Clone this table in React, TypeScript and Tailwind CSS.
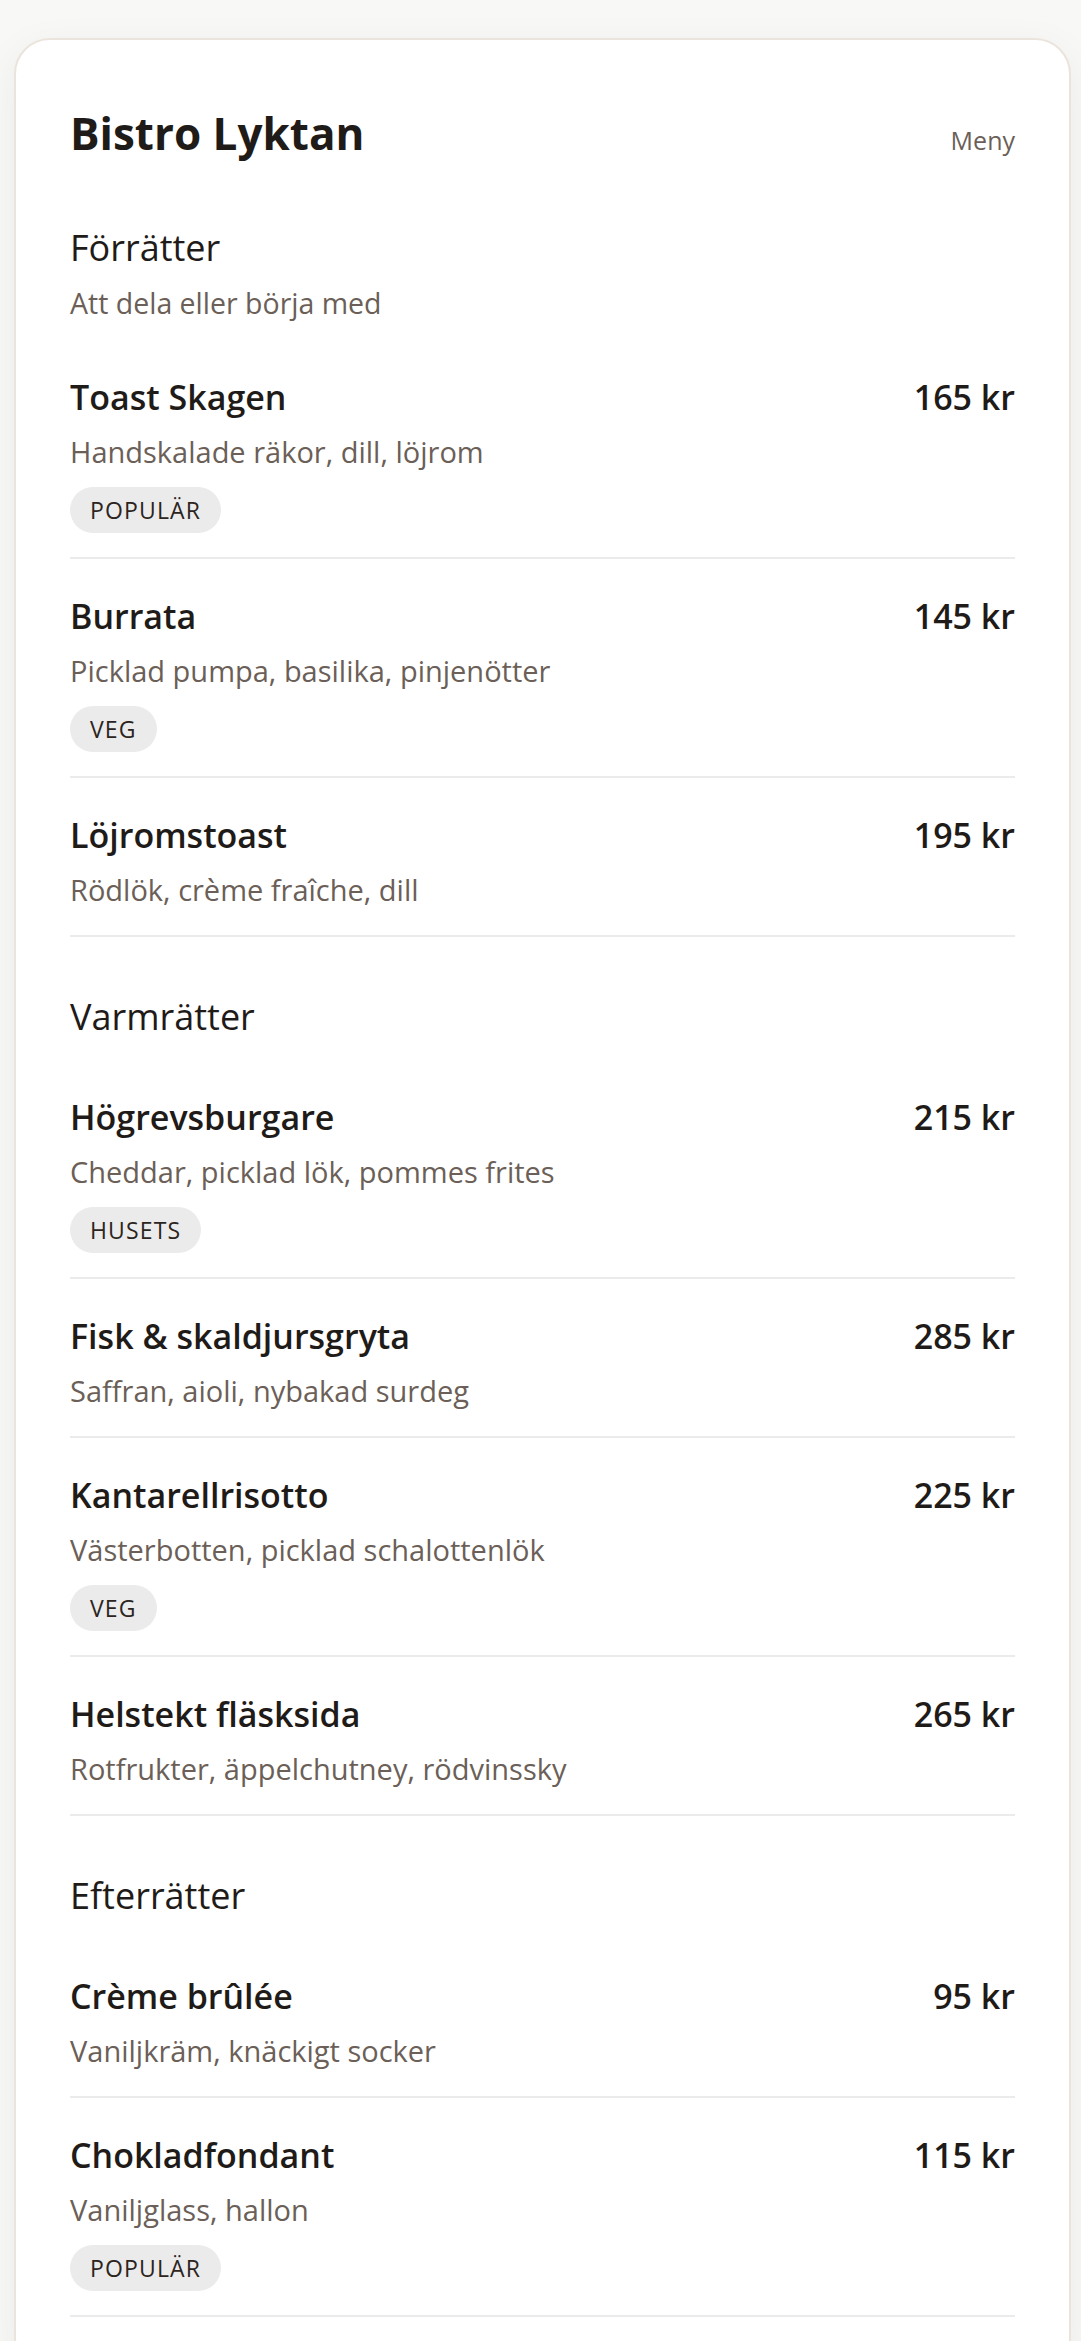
import React from 'react';

type MenuItem = {
  name: string;
  desc: string;
  price: number;
  tag?: string;
};

type Section = {
  title: string;
  subtitle?: string;
  items: MenuItem[];
};

const SECTIONS: Section[] = [
  {
    title: 'Förrätter',
    subtitle: 'Att dela eller börja med',
    items: [
      { name: 'Toast Skagen', desc: 'Handskalade räkor, dill, löjrom', price: 165, tag: 'Populär' },
      { name: 'Burrata', desc: 'Picklad pumpa, basilika, pinjenötter', price: 145, tag: 'Veg' },
      { name: 'Löjromstoast', desc: 'Rödlök, crème fraîche, dill', price: 195 },
    ],
  },
  {
    title: 'Varmrätter',
    items: [
      { name: 'Högrevsburgare', desc: 'Cheddar, picklad lök, pommes frites', price: 215, tag: 'Husets' },
      { name: 'Fisk & skaldjursgryta', desc: 'Saffran, aioli, nybakad surdeg', price: 285 },
      { name: 'Kantarellrisotto', desc: 'Västerbotten, picklad schalottenlök', price: 225, tag: 'Veg' },
      { name: 'Helstekt fläsksida', desc: 'Rotfrukter, äppelchutney, rödvinssky', price: 265 },
    ],
  },
  {
    title: 'Efterrätter',
    items: [
      { name: 'Crème brûlée', desc: 'Vaniljkräm, knäckigt socker', price: 95 },
      { name: 'Chokladfondant', desc: 'Vaniljglass, hallon', price: 115, tag: 'Populär' },
    ],
  },
];

const MenuRow: React.FC<{ item: MenuItem }> = ({ item }) => (
  <li className="border-b-2 border-[#ebebeb] pt-[33px] pb-6">
    <div className="flex items-baseline justify-between gap-6">
      <h3 className="text-[34px] leading-[48px] font-semibold text-[#1f1b18]">{item.name}</h3>
      <span className="text-[34px] leading-[48px] font-semibold text-[#1f1b18] whitespace-nowrap">{item.price} kr</span>
    </div>
    <p className="mt-[10px] text-[29px] leading-[42px] text-[#6b5f58]">{item.desc}</p>
    {item.tag && (
      <span className="mt-[14px] inline-flex h-[46px] items-center rounded-full bg-[#ebebeb] px-5 text-[23px] uppercase tracking-wider text-[#2b2420]">
        {item.tag}
      </span>
    )}
  </li>
);

export default function App() {
  return (
    <div className="min-h-screen bg-[#f8f8f7] pl-[14px] pr-[10px] pt-[38px] font-['Open_Sans',sans-serif]">
      <div className="rounded-[36px] border-2 border-[#ebe4dc] bg-white px-[54px] pt-[65px] pb-14 shadow-[0_10px_40px_rgba(0,0,0,0.06)]">
        <header className="mb-[61px] flex items-baseline justify-between">
          <h1 className="text-[44px] leading-[56px] font-bold text-[#1f1b18]">Bistro Lyktan</h1>
          <span className="text-[25px] text-[#6b5f58]">Meny</span>
        </header>

        <div className="flex flex-col gap-[54px]">
          {SECTIONS.map(section => (
            <section key={section.title}>
              <div className="mb-[17px]">
                <h2 className="text-[36px] leading-[52px] font-normal text-[#1f1b18]">{section.title}</h2>
                {section.subtitle && (
                  <p className="mt-[9px] text-[28.5px] leading-[40px] text-[#6b5f58]">{section.subtitle}</p>
                )}
              </div>
              <ul>
                {section.items.map(item => (
                  <MenuRow key={item.name} item={item} />
                ))}
              </ul>
            </section>
          ))}
        </div>
      </div>
    </div>
  );
}
